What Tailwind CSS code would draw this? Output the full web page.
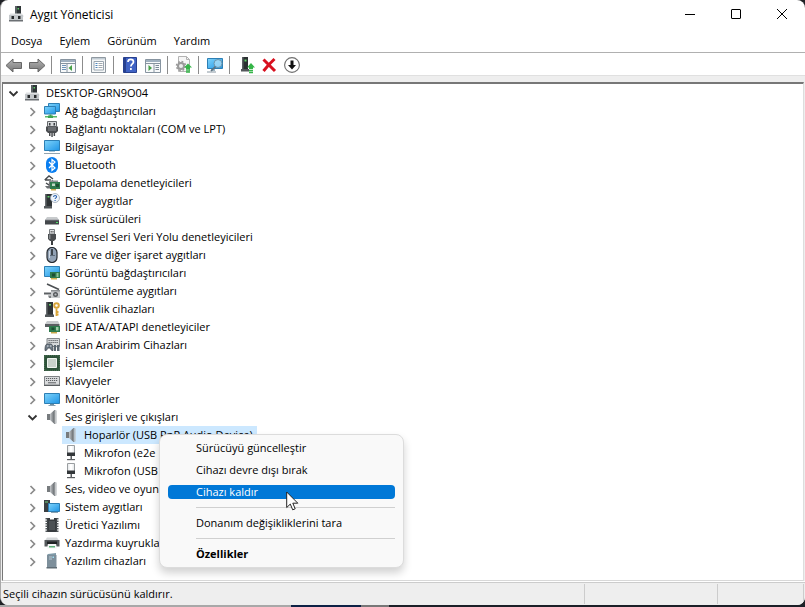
<!DOCTYPE html>
<html lang="tr">
<head>
  <meta charset="UTF-8">
  <meta name="viewport" content="width=device-width, initial-scale=1.0">
  <title>Aygıt Yöneticisi</title>
  <script src="https://cdn.jsdelivr.net/npm/@tailwindcss/browser@4"></script>
</head>
<body class="h-screen overflow-hidden flex flex-col bg-[#202226] text-black text-[11px] font-['Open_Sans','Noto_Sans',sans-serif]">

<!-- icon sprites -->
<svg class="absolute w-0 h-0" xmlns="http://www.w3.org/2000/svg" aria-hidden="true">
  <defs>
    <linearGradient id="screen" x1="0" y1="0" x2="1" y2="1">
      <stop offset="0" stop-color="#7fd4fb"/><stop offset="1" stop-color="#1f95e6"/>
    </linearGradient>
    <linearGradient id="steel" x1="0" y1="0" x2="1" y2="0">
      <stop offset="0" stop-color="#c4c7ca"/><stop offset="1" stop-color="#62676b"/>
    </linearGradient>
    <linearGradient id="arrow" x1="0" y1="0" x2="0" y2="1">
      <stop offset="0" stop-color="#b4b4b4"/><stop offset="1" stop-color="#757575"/>
    </linearGradient>
  </defs>

  <symbol id="i-computer" viewBox="0 0 16 16">
    <path d="M6 0h6v8H6z" fill="#2f3537"/><path d="M6 0h2v8H6z" fill="#596063"/><path d="M8.500 2h1.500v1.500H8.500z" fill="#5fd06a"/>
    <path d="M1 7.500h12l2 3H0z" fill="#dfe1e3"/><path d="M0 9h14V14.500H0z" fill="#c3c7ca"/>
    <path d="M2.500 10H5v3H2.500zM9 10h2.500v3H9z" fill="#26292b"/><path d="M0 14h14v1.500H0z" fill="#6c7074"/>
  </symbol>
  <symbol id="i-network" viewBox="0 0 16 16">
    <path d="M4.500.500h11v8h-11z" fill="url(#screen)" stroke="#2d7fb4"/>
    <path d="M.500 3.500h11v7.500H.500z" fill="url(#screen)" stroke="#2d7fb4"/>
    <path d="M5.500 11.500h2v1.500h-2z" fill="#4b9d5a"/><path d="M1 13h12v1.500H1z" fill="#59b96a"/><path d="M4 12.500h5V15H4z" fill="#3da552"/>
  </symbol>
  <symbol id="i-port" viewBox="0 0 16 16">
    <path d="M3.500.500h9v5h-9z" fill="#d5d8da" stroke="#66696c"/><path d="M5 2h1.500v2.500H5zM9.500 2H11v2.500H9.500z" fill="#3a3d40"/>
    <path d="M2 5.500h12V10l-2 2H4l-2-2z" fill="#4a4d50"/><path d="M4 7h8M4 9h8" stroke="#8c9093"/>
    <path d="M5 12h1.500v3H5zM7.300 12h1.500v4H7.300zM9.600 12h1.500v3H9.600z" fill="#4a4d50"/>
  </symbol>
  <symbol id="i-pc" viewBox="0 0 16 16">
    <path d="M.500 1.500h15v10H.500z" fill="url(#screen)" stroke="#2d7fb4"/><path d="M5 12h6v1H5z" fill="#a8c6d8"/><path d="M0 14h16v1H0z" fill="#93a4af"/>
  </symbol>
  <symbol id="i-bluetooth" viewBox="0 0 16 16">
    <rect x="2" y="0" width="12" height="16" rx="6" fill="#0a7ef0"/>
    <path d="M5 5l6 6-3 2.500v-11L11 5l-6 6" fill="none" stroke="#fff" stroke-width="1.200"/>
  </symbol>
  <symbol id="i-storage" viewBox="0 0 16 16">
    <path d="M.700 5L5 1l4 3M1 5h6M5 8.500l4-3M2 8l3 2h4" fill="none" stroke="#474b4e" stroke-width="1.400"/>
    <path d="M1 11h6v2.500H3z" fill="#6c7073"/><path d="M6 7h10v7H6z" fill="#2e7a4d"/><path d="M8 8.500h3v2.500H8z" fill="#bfd8c4"/>
    <path d="M12 9h3v3h-3z" fill="#1d4e33"/><path d="M7 14h5v1.500H7z" fill="#c9a94d"/><path d="M5 5.500h9v1.500H5z" fill="#8d9194"/>
  </symbol>
  <symbol id="i-other" viewBox="0 0 16 16">
    <path d="M1 1h7v13H1z" fill="#2f3436"/><path d="M1 1h1.500v13H1z" fill="#686d70"/><path d="M3.500 3h2v1.500h-2z" fill="#61d06a"/>
    <path d="M0 13h8v2.500H0z" fill="#53585b"/>
    <circle cx="11" cy="5" r="4.500" fill="#eef4fa" stroke="#9eabb8" stroke-width=".8"/>
    <path d="M9.600 4c0-2 3-1.800 3-.2 0 1.200-1.500 1-1.500 2.200M11.100 7v1" fill="none" stroke="#2a63b0" stroke-width="1.100"/>
  </symbol>
  <symbol id="i-disk" viewBox="0 0 16 16">
    <path d="M3 6h10l2 3H1z" fill="#c8cbcd"/><path d="M1 9h14v4.500H1z" fill="#44484b"/><path d="M12 11h2v1h-2z" fill="#4fe066"/><path d="M1 9h14" stroke="#8d9194" stroke-width=".8"/>
  </symbol>
  <symbol id="i-usb" viewBox="0 0 16 16">
    <path d="M5.500.500h5V5h-5z" fill="#e0e2e4" stroke="#7a7e81"/><path d="M6.700 2h1v1.500h-1zM8.500 2h1v1.500h-1z" fill="#444"/>
    <path d="M4 5h8v5l-2 2H6l-2-2z" fill="#4a4d50"/><path d="M7 12h2v4H7z" fill="#3b3e40"/><path d="M5 5.500h1.500V10H5z" fill="#85898c"/>
  </symbol>
  <symbol id="i-mouse" viewBox="0 0 16 16">
    <rect x="3" y=".5" width="10" height="15" rx="5" fill="#92a2b5" stroke="#252a30" stroke-width="1.200"/>
    <path d="M5 8.500h6" stroke="#5d6b7a"/><path d="M8 2v6" stroke="#1f2429" stroke-width="1.500"/><path d="M5.500 4v7" stroke="#d0dae5"/>
  </symbol>
  <symbol id="i-display" viewBox="0 0 16 16">
    <path d="M.500 1.500h15v10H.500z" fill="url(#screen)" stroke="#2d7fb4"/>
    <path d="M6 7h10v6H6z" fill="#2e7a4d"/><path d="M8 8.500h3v3H8z" fill="#1d4e33"/><path d="M12.500 8h2v4h-2z" fill="#8ec59a"/><path d="M7 13h6v1.500H7z" fill="#d2b04f"/>
  </symbol>
  <symbol id="i-imaging" viewBox="0 0 16 16">
    <path d="M3 1l12 5.500" stroke="#4b4f52" stroke-width="1.600"/><path d="M0 9.500h7v2H0z" fill="#5d6164"/>
    <path d="M7 7h9v8H7z" fill="#c9ccce"/><path d="M7 7h9v1.500H7z" fill="#8d9194"/><circle cx="11.500" cy="11.500" r="2.500" fill="#55595c"/><circle cx="11.500" cy="11.500" r="1.100" fill="#b9bdc0"/>
    <path d="M4 12.500h3V15H5z" fill="#7b7f82"/>
  </symbol>
  <symbol id="i-security" viewBox="0 0 16 16">
    <path d="M2 1h7v13H2z" fill="#2f3436"/><path d="M2 1h1.500v13H2z" fill="#686d70"/><path d="M5 3h2v1.500H5z" fill="#61d06a"/><path d="M1 13.500h9V16H1z" fill="#53585b"/>
    <circle cx="12.500" cy="4.500" r="2.300" fill="none" stroke="#d9a63a" stroke-width="2"/><path d="M12.500 7.500V15M12.500 11h2M12.500 13.500h2" stroke="#d9a63a" stroke-width="1.800"/>
  </symbol>
  <symbol id="i-ide" viewBox="0 0 16 16">
    <path d="M3 2h11l1.500 3H1z" fill="#c8cbcd"/><path d="M1 5h14.500v3H1z" fill="#5b5f62"/>
    <path d="M5 7h11v6H5z" fill="#2e7a4d"/><path d="M7.500 8.500h3V11h-3z" fill="#1d4e33"/><path d="M12 8h2.500v3.500H12z" fill="#9bcfa6"/><path d="M7 13h6v1.500H7z" fill="#c9a94d"/>
  </symbol>
  <symbol id="i-hid" viewBox="0 0 16 16">
    <path d="M3 1.500h12.500v8H3z" fill="#d5d8da" stroke="#85898c"/><path d="M4.500 3.500H14M4.500 5.500H14" stroke="#62666a" stroke-dasharray="1.300 .7"/>
    <path d="M1 13.500c0-4 .5-6.500 2.500-6.500h3C8.500 7 9 9.500 9 13.500c-1.500 1-2.500-2-3-2.500H4c-.5.500-1.500 3.500-3 2.500z" fill="#6d7985" stroke="#424a52" stroke-width=".8"/>
    <path d="M10 8h2v6h-2zM13 8h2.500v6H13z" fill="#5b6771"/><path d="M3 9h1.500M6 9h1.500M12 10.500h1" stroke="#e4e8eb"/>
  </symbol>
  <symbol id="i-cpu" viewBox="0 0 16 16">
    <path d="M0 0h16v16H0z" fill="#2c5138"/><path d="M.700.700h14.600v14.600H.700z" fill="none" stroke="#55795e" stroke-dasharray="1 1.100"/>
    <path d="M3.500 3.500h9v9h-9z" fill="#c9d2cb" stroke="#eef3ef"/>
  </symbol>
  <symbol id="i-keyboard" viewBox="0 0 16 16">
    <path d="M.500 3.500h15v8.500H.500z" fill="#d9dbdd" stroke="#7e8285"/><path d="M2 5.500h12M2 7.500h12" stroke="#5b5f62" stroke-dasharray="1.200 .8"/><path d="M4 9.800h8" stroke="#5b5f62"/><path d="M0 12h16v1H0z" fill="#5b5f62"/>
  </symbol>
  <symbol id="i-monitor" viewBox="0 0 16 16">
    <path d="M.500 2.500h15v10H.500z" fill="url(#screen)" stroke="#2d7fb4"/><path d="M6 13h4v1.500H6z" fill="#6f8ea1"/><path d="M4.500 14h7v1h-7z" fill="#8aa2b1"/>
  </symbol>
  <symbol id="i-speaker" viewBox="0 0 16 16">
    <path d="M3 5h3v6H3z" fill="#777b7e"/><path d="M6 5l4.500-4v14L6 11z" fill="url(#steel)"/><path d="M10 1h1.500v14H10z" fill="#8b9093"/><path d="M12.200 1.500v13" stroke="#c0c4c7"/>
  </symbol>
  <symbol id="i-mic" viewBox="0 0 16 16">
    <path d="M4.500.500h7v10h-7z" fill="#eceeef" stroke="#9a9ea1"/><path d="M6.500 1h3v9h-3z" fill="#fff"/><path d="M4 7.500h8V11H4z" fill="#33373a"/>
    <path d="M7.500 11h1.500v3H7.500z" fill="#5b5f62"/><path d="M4 14h8v1.200H4z" fill="#5b5f62"/>
  </symbol>
  <symbol id="i-system" viewBox="0 0 16 16">
    <path d="M0 1h6v12H0z" fill="#3a3f42"/><path d="M1 2.500h3v1H1z" fill="#74d07c"/><path d="M4.500 4.500h11v8h-11z" fill="url(#screen)" stroke="#2d7fb4"/><path d="M7 13.500h7" stroke="#8aa2b1"/>
  </symbol>
  <symbol id="i-firmware" viewBox="0 0 16 16">
    <path d="M3 1h10v14H3z" fill="#383c3f"/><path d="M2.500 1v14M13.500 1v14" stroke="#53585b" stroke-width="2" stroke-dasharray="1.500 1"/><path d="M6 1h4v1.500H6z" fill="#fff"/><path d="M5 4h6v9H5z" fill="#4c5154"/>
  </symbol>
  <symbol id="i-printer" viewBox="0 0 16 16">
    <path d="M3 2.500h10l2 3H1z" fill="#d5d8da"/><path d="M.500 5h15v6.500H.500z" fill="#54585b"/><path d="M3 6.500h10V9H3z" fill="#1f2224"/>
    <path d="M4 9h8l1 4.500H3z" fill="#f4f6f5"/><path d="M5 11h6v1.500H5z" fill="#5cae78"/>
  </symbol>
  <symbol id="i-software" viewBox="0 0 16 16">
    <path d="M4 1l8-1v14H3V2z" fill="#7f9aa8"/><path d="M3 2h9.500v12.500H3z" fill="#7d8f9b"/><path d="M5 4h3M5 6h3" stroke="#b8c8d2"/><path d="M8.500 3.500H10V5H8.500z" fill="#9fe0f5"/><path d="M2.500 14h10.500v1.500H2.500z" fill="#5f6c75"/>
  </symbol>

  <!-- toolbar -->
  <symbol id="t-back" viewBox="0 0 18 18">
    <path d="M1 9.500L8 3v3.500h8.500v6H8V16z" fill="url(#arrow)" stroke="#666"/>
  </symbol>
  <symbol id="t-forward" viewBox="0 0 18 18">
    <path d="M17 9.500L10 3v3.500H1.500v6H10V16z" fill="url(#arrow)" stroke="#666"/>
  </symbol>
  <symbol id="t-tree" viewBox="0 0 18 18">
    <path d="M1.500 3.500h15v13h-15z" fill="#f7f9fa" stroke="#8794a0"/><path d="M2 4h14v2H2z" fill="#9fb0bf"/><path d="M2 7.500h14" stroke="#8794a0"/>
    <path d="M3 9.500h4M3 11.500h4M3 13.500h4" stroke="#6d93b8"/><path d="M8 8v8" stroke="#8794a0"/><path d="M13 9v6L9.500 12z" fill="#46a046"/>
  </symbol>
  <symbol id="t-props" viewBox="0 0 18 18">
    <path d="M1.500 1.500h14v15h-14z" fill="#f4f6f7" stroke="#9099a1"/><path d="M2 2h13v1.500H2z" fill="#c1cbd3"/>
    <path d="M4 5.500h9.500V14H4z" fill="#fff" stroke="#9aa6b0"/><path d="M5.500 7.500h2M5.500 9.500h2M5.500 11.500h2" stroke="#4f87bd"/><path d="M8.500 7.500h4M8.500 9.500h4M8.500 11.500h4" stroke="#a0a8ae"/>
  </symbol>
  <symbol id="t-panel" viewBox="0 0 18 18">
    <path d="M1.500 3.500h15v13h-15z" fill="#f7f9fa" stroke="#8794a0"/><path d="M2 4h14v2H2z" fill="#9fb0bf"/><path d="M2 7.500h14" stroke="#8794a0"/>
    <path d="M11.500 9.500H15M11.500 11.500H15M11.500 13.500H15" stroke="#7c8b99"/><path d="M10 8v8" stroke="#8794a0"/><path d="M4.500 9v6L8 12z" fill="#46a046"/>
  </symbol>
  <symbol id="t-update" viewBox="0 0 18 18">
    <path d="M3.500.500h8l3 3v12h-11z" fill="#f6f6f6" stroke="#b3b3b3"/><path d="M11.500.5v3h3" fill="none" stroke="#b3b3b3"/>
    <circle cx="6" cy="10" r="3" fill="#eee" stroke="#9a9a9a" stroke-width="2"/><circle cx="6" cy="10" r="4.500" fill="none" stroke="#9a9a9a" stroke-width="1.500" stroke-dasharray="1.800 1.730"/>
    <path d="M13 7.500l4 4h-2v1.500h-4v-1.500H9z" fill="#35b548"/><path d="M11 14h4M11 16h4" stroke="#35b548" stroke-width="1.300"/>
  </symbol>
  <symbol id="t-scan" viewBox="0 0 18 18">
    <path d="M1.500 2.500h15v10h-15z" fill="url(#screen)" stroke="#2d7fb4"/><path d="M1 16h9" stroke="#8796a1"/><path d="M5 13h4v2H5z" fill="#9fb5c3"/>
    <circle cx="12" cy="7.500" r="4" fill="#b5e2f8" fill-opacity=".7" stroke="#6c94ac"/><path d="M9.500 10.500L5 15" stroke="#5d7280" stroke-width="1.700"/>
  </symbol>
  <symbol id="t-enable" viewBox="0 0 18 18">
    <path d="M5 1h6v12H5z" fill="#2b3032"/><path d="M5 1h1.500v12H5z" fill="#5b6063"/><path d="M7.500 3.500h2v2h-2z" fill="#61d06a"/><path d="M4 13h8v2.500H4z" fill="#53585b"/>
    <path d="M14 7l4 4.500h-2v1.500h-4v-1.500h-2z" fill="#35b548"/><path d="M12 14.500h4M12 16.500h4" stroke="#35b548" stroke-width="1.300"/>
  </symbol>
  <symbol id="t-remove" viewBox="0 0 18 18">
    <path d="M3.500 3.500Q8 8 15 15M14.500 3Q9 8 3.500 15" fill="none" stroke="#d8101f" stroke-width="3"/>
  </symbol>
  <symbol id="t-disable" viewBox="0 0 18 18">
    <circle cx="9" cy="9" r="7.400" fill="#fff" stroke="#6f6f6f" stroke-width="1.100"/><path d="M7.500 4.500h3V9H13l-4 4.500L5 9h2.500z" fill="#111"/>
  </symbol>

  <symbol id="c-right" viewBox="0 0 16 16"><path d="M5.500 5l4 4-4 4" fill="none" stroke="#8a8a8a" stroke-width="1.700"/></symbol>
  <symbol id="c-down" viewBox="0 0 16 16"><path d="M3.500 6.500l4 4 4-4" fill="none" stroke="#333" stroke-width="1.800"/></symbol>
</svg>

<!-- window -->
<div class="relative flex-1 min-h-0 flex flex-col rounded-lg overflow-hidden bg-white border-l border-[#a8a8a8]">
  <header class="h-7 shrink-0 flex items-center pl-2">
    <svg class="size-4 mr-[5px]"><use href="#i-computer"/></svg>
    <h1 class="flex-1 text-[12px] pt-[2px]">Aygıt Yöneticisi</h1>
    <button aria-label="Simge durumuna küçült" class="w-[46px] h-7 flex justify-center items-center">
      <svg class="w-3 h-3" viewBox="0 0 12 12"><path d="M1 6.500h10" stroke="#000"/></svg>
    </button>
    <button aria-label="Ekranı kapla" class="w-[46px] h-7 flex justify-center items-center">
      <svg class="w-3 h-3" viewBox="0 0 12 12"><rect x="1.500" y="1.500" width="9" height="9" rx=".5" fill="none" stroke="#000"/></svg>
    </button>
    <button aria-label="Kapat" class="w-[46px] h-7 flex justify-center items-center">
      <svg class="w-3 h-3" viewBox="0 0 12 12"><path d="M1 1l10 10M11 1L1 11" stroke="#000"/></svg>
    </button>
  </header>

  <nav class="h-[25px] shrink-0 flex items-center gap-[17px] pl-[10px] pt-[2px] border-b border-[#b0b0b0]">
    <button>Dosya</button>
    <button>Eylem</button>
    <button>Görünüm</button>
    <button>Yardım</button>
  </nav>

  <div class="h-[22px] shrink-0 flex items-center gap-[5px] pl-1 pt-[2px]">
    <button aria-label="Geri"><svg class="size-[18px]"><use href="#t-back"/></svg></button>
    <button aria-label="İleri"><svg class="size-[18px]"><use href="#t-forward"/></svg></button>
    <span class="w-px h-[18px] mr-[2px] bg-[#8c8c8c]"></span>
    <button aria-label="Konsol ağacı"><svg class="size-[18px]"><use href="#t-tree"/></svg></button>
    <span class="w-px h-[18px] mr-[2px] bg-[#8c8c8c]"></span>
    <button aria-label="Özellikler"><svg class="size-[18px]"><use href="#t-props"/></svg></button>
    <span class="w-px h-[18px] mr-[2px] bg-[#8c8c8c]"></span>
    <button aria-label="Yardım">
      <svg class="size-[18px]" viewBox="0 0 18 18">
        <path d="M2.500 1.500h13v15h-13z" fill="#3f62c4" stroke="#27408f"/><path d="M3 2h2v14H3z" fill="#27408f"/>
        <path d="M7 6c0-3.500 5.500-3.500 5.500 0 0 2-2.600 2-2.600 4.500M9.900 12v2" fill="none" stroke="#fff" stroke-width="1.700"/>
      </svg>
    </button>
    <button aria-label="Eylem bölmesi"><svg class="size-[18px]"><use href="#t-panel"/></svg></button>
    <span class="w-px h-[18px] mr-[2px] bg-[#8c8c8c]"></span>
    <button aria-label="Sürücüyü güncelleştir"><svg class="size-[18px]"><use href="#t-update"/></svg></button>
    <span class="w-px h-[18px] mr-[2px] bg-[#8c8c8c]"></span>
    <button aria-label="Donanım değişikliklerini tara"><svg class="size-[18px]"><use href="#t-scan"/></svg></button>
    <span class="w-px h-[18px] mr-[2px] bg-[#8c8c8c]"></span>
    <button aria-label="Aygıtı etkinleştir"><svg class="size-[18px]"><use href="#t-enable"/></svg></button>
    <button aria-label="Cihazı kaldır"><svg class="size-[18px]"><use href="#t-remove"/></svg></button>
    <button aria-label="Cihazı devre dışı bırak"><svg class="size-[18px]"><use href="#t-disable"/></svg></button>
  </div>

  <main class="flex-1 min-h-0 flex flex-col pt-[6px] pr-px pl-px bg-[#eee] border-t border-[#e0e0e0]">
    <div class="flex-1 min-h-0 overflow-hidden bg-white border-t-2 border-l border-r border-b border-t-[#777] border-l-[#777] border-r-[#ddd] border-b-[#d8d8d8]">
      <ul id="tree" role="tree" class="pl-[3px]"></ul>
    </div>
  </main>

  <footer class="h-[23px] mt-px shrink-0 flex items-center bg-[#eee] border-t border-[#ccc]">
    <p class="flex-1 pl-[2px] pt-px">Seçili cihazın sürücüsünü kaldırır.</p>
    <span class="w-[133px] h-5 border-l border-[#ccc]"></span>
    <span class="w-[87px] h-5 mr-px border-l border-r border-[#ccc]"></span>
  </footer>
</div>

<!-- desktop strip below the window -->
<div class="h-[2px] shrink-0 flex">
  <span class="w-[291px] bg-[#a8a8a8]"></span>
  <span class="w-[70px] bg-[#0d2145]"></span>
  <span class="w-[28px] bg-[#777]"></span>
  <span class="flex-1 bg-[#1b1f27]"></span>
</div>

<!-- context menu -->
<div role="menu" class="absolute left-[159px] top-[434px] w-[245px] py-[2px] rounded-lg border border-[#dcdcdc] bg-[#f9f9f9] shadow-[0_5px_9px_rgba(0,0,0,0.18)]">
  <button role="menuitem" class="block w-full h-[22px] pl-9 text-left">Sürücüyü güncelleştir</button>
  <button role="menuitem" class="block w-full h-[22px] pl-9 text-left">Cihazı devre dışı bırak</button>
  <button role="menuitem" class="flex items-center w-full h-[22px] px-2 text-left text-white">
    <span class="flex-1 h-[14px] leading-[14px] pl-7 rounded-sm bg-[#0078d7]">Cihazı kaldır</span>
  </button>
  <hr class="my-1 ml-9 mr-2 border-[#d0d0d0]">
  <button role="menuitem" class="block w-full h-[22px] pl-9 text-left">Donanım değişikliklerini tara</button>
  <hr class="my-1 ml-9 mr-2 border-[#d0d0d0]">
  <button role="menuitem" class="block w-full h-[22px] pl-9 text-left font-bold">Özellikler</button>
</div>

<!-- pointer -->
<svg class="absolute left-[286px] top-[491px] w-[13px] h-[20px]" viewBox="0 0 13 20">
  <path d="M.700 1v15.500l3.600-3.400 2.400 5.700 2.500-1-2.400-5.600h5z" fill="#fff" stroke="#222"/>
</svg>

<script>
const devices = [
  { level: 0, icon: 'computer', name: 'DESKTOP-GRN9O04', open: true },
  { level: 1, icon: 'network', name: 'Ağ bağdaştırıcıları' },
  { level: 1, icon: 'port', name: 'Bağlantı noktaları (COM ve LPT)' },
  { level: 1, icon: 'pc', name: 'Bilgisayar' },
  { level: 1, icon: 'bluetooth', name: 'Bluetooth' },
  { level: 1, icon: 'storage', name: 'Depolama denetleyicileri' },
  { level: 1, icon: 'other', name: 'Diğer aygıtlar' },
  { level: 1, icon: 'disk', name: 'Disk sürücüleri' },
  { level: 1, icon: 'usb', name: 'Evrensel Seri Veri Yolu denetleyicileri' },
  { level: 1, icon: 'mouse', name: 'Fare ve diğer işaret aygıtları' },
  { level: 1, icon: 'display', name: 'Görüntü bağdaştırıcıları' },
  { level: 1, icon: 'imaging', name: 'Görüntüleme aygıtları' },
  { level: 1, icon: 'security', name: 'Güvenlik cihazları' },
  { level: 1, icon: 'ide', name: 'IDE ATA/ATAPI denetleyiciler' },
  { level: 1, icon: 'hid', name: 'İnsan Arabirim Cihazları' },
  { level: 1, icon: 'cpu', name: 'İşlemciler' },
  { level: 1, icon: 'keyboard', name: 'Klavyeler' },
  { level: 1, icon: 'monitor', name: 'Monitörler' },
  { level: 1, icon: 'speaker', name: 'Ses girişleri ve çıkışları', open: true },
  { level: 2, icon: 'speaker', name: 'Hoparlör (USB PnP Audio Device)', selected: true },
  { level: 2, icon: 'mic', name: 'Mikrofon (e2e' },
  { level: 2, icon: 'mic', name: 'Mikrofon (USB' },
  { level: 1, icon: 'speaker', name: 'Ses, video ve oyun' },
  { level: 1, icon: 'system', name: 'Sistem aygıtları' },
  { level: 1, icon: 'firmware', name: 'Üretici Yazılımı' },
  { level: 1, icon: 'printer', name: 'Yazdırma kuyrukları' },
  { level: 1, icon: 'software', name: 'Yazılım cihazları' },
];

const indent = ['pl-0', 'pl-[19px]', 'pl-[38px]'];

document.getElementById('tree').innerHTML = devices
  .map(
    (d) => `
      <li role="treeitem" class="h-[18px] flex items-center ${indent[d.level]}">
        ${d.level < 2
          ? `<button class="w-4 h-4 mr-[2px]" aria-label="${d.name}"><svg class="size-4"><use href="#${d.open ? 'c-down' : 'c-right'}"/></svg></button>`
          : '<span class="w-4 mr-[2px]"></span>'}
        <span class="h-[18px] flex items-center gap-[5px] pl-px pr-1 whitespace-nowrap ${d.selected ? 'bg-[#cce8ff]' : ''}">
          <svg class="size-4 shrink-0"><use href="#i-${d.icon}"/></svg>${d.name}
        </span>
      </li>
    `
  )
  .join('');
</script>
</body>
</html>
